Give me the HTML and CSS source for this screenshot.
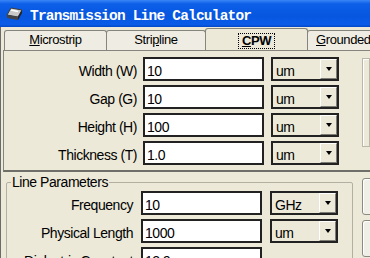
FILE: index.html
```html
<!DOCTYPE html>
<html lang="en">
<head>
  <meta charset="UTF-8">
  <title>Transmission Line Calculator</title>
  <link rel="stylesheet" href="styles.css">
</head>
<body>

  <!-- Title bar -->
  <div class="titlebar">
    <svg class="app-icon" width="17" height="14" viewBox="0 0 17 14">
      <polygon points="5,1 16,3 12,10 1,8" fill="#c9c9c9" stroke="#3a3a3a" stroke-width="1"/>
      <polygon points="1,8 12,10 12,13 1,11" fill="#444"/>
      <polygon points="12,10 16,3 16,6 12,13" fill="#222"/>
      <line x1="5" y1="3" x2="12" y2="4.5" stroke="#fff" stroke-width="1.5"/>
    </svg>
    <span class="title">Transmission Line Calculator</span>
  </div>

  <div class="client">
    <!-- Tabs -->
    <div class="tabs">
      <div class="tab tab-micro"><u>M</u>icrostrip</div>
      <div class="tab tab-strip">Stri<u>p</u>line</div>
      <div class="tab tab-cpw active"><span class="focus"><u>C</u>PW</span></div>
      <div class="tab tab-ground"><u>G</u>rounded</div>
    </div>

    <!-- CPW page -->
    <div class="tabpage">
      <div class="form">
        <div class="row">
          <label class="lbl">Width (W)</label>
          <input class="field" type="text" value="10">
          <div class="combo"><span>um</span><div class="drop"></div></div>
        </div>
        <div class="row">
          <label class="lbl">Gap (G)</label>
          <input class="field" type="text" value="10">
          <div class="combo"><span>um</span><div class="drop"></div></div>
        </div>
        <div class="row">
          <label class="lbl">Height (H)</label>
          <input class="field" type="text" value="100">
          <div class="combo"><span>um</span><div class="drop"></div></div>
        </div>
        <div class="row">
          <label class="lbl">Thickness (T)</label>
          <input class="field" type="text" value="1.0">
          <div class="combo"><span>um</span><div class="drop"></div></div>
        </div>
      </div>
      <div class="side-box"></div>
    </div>

    <!-- Line parameters -->
    <div class="lower">
      <fieldset class="group">
        <legend>Line Parameters</legend>
        <div class="form">
          <div class="row">
            <label class="lbl">Frequency</label>
            <input class="field" type="text" value="10">
            <div class="combo"><span>GHz</span><div class="drop"></div></div>
          </div>
          <div class="row">
            <label class="lbl">Physical Length</label>
            <input class="field" type="text" value="1000">
            <div class="combo"><span>um</span><div class="drop"></div></div>
          </div>
          <div class="row">
            <label class="lbl">Dielectric Constant</label>
            <input class="field" type="text" value="12.9">
          </div>
        </div>
      </fieldset>
      <div class="buttons">
        <div class="btn"></div>
        <div class="btn"></div>
      </div>
    </div>
  </div>

</body>
</html>
```

FILE: styles.css
```css
/* Global */
* {
  box-sizing: border-box;
}

body {
  margin: 0;
  width: 370px;
  height: 258px;
  overflow: hidden;
  background-color: #ece9d8;
  font-family: "Liberation Sans", Arial, sans-serif;
  font-size: 14px;
  letter-spacing: -0.45px;
  color: #000;
}

/* Title bar */
.titlebar {
  height: 27px;
  display: flex;
  color: #fff;
  background: linear-gradient(#3a86f7 0%, #0d5fe8 14%, #0756e0 60%, #0a5ce8 90%, #0447c8 100%);
}

.app-icon {
  margin: 7px 7px 0 6px;
}

.title {
  font-family: "Liberation Mono", monospace;
  font-weight: bold;
  font-size: 14.5px;
  letter-spacing: -0.8px;
  line-height: 16px;
  padding-top: 8px;
  white-space: nowrap;
}

/* Window body */
.client {
  height: 231px;
  border-left: 1px solid #6b6b6b;
}

/* Tabs */
.tabs {
  display: flex;
  align-items: flex-end;
  height: 23px;
  padding-left: 3px;
  white-space: nowrap;
  overflow: hidden;
}

.tab {
  height: 20px;
  margin-left: -1px;
  border: 1px solid #85857e;
  border-bottom: none;
  border-radius: 3px 3px 0 0;
  background-color: #efede3;
  text-align: center;
  font-size: 13px;
  letter-spacing: -0.4px;
  line-height: 18px;
  flex-shrink: 0;
}

.tab-micro {
  width: 103px;
  margin-left: 0;
}

.tab-strip {
  width: 100px;
}

.tab-cpw {
  width: 103px;
}

.tab-ground {
  width: 100px;
  text-align: left;
  padding-left: 8px;
}

.tab.active {
  position: relative;
  z-index: 1;
  height: 23px;
  margin-bottom: -1px;
  padding-top: 3px;
  background-color: #ece9d8;
  font-weight: bold;
}

.focus {
  display: inline-block;
  line-height: 14px;
  padding: 0 3px;
  outline: 1px dotted #000;
}

/* Tab page */
.tabpage {
  display: flex;
  margin-left: 2px;
  padding: 6px 0 5px 0;
  border: 1px solid #85857e;
  border-right: none;
  border-bottom: 2px solid #6f6f69;
}

.form {
  display: flex;
  flex-direction: column;
  gap: 4px;
}

.row {
  display: flex;
  align-items: center;
  height: 24px;
}

.lbl {
  width: 133px;
  margin-right: 6px;
  padding-top: 4px;
  line-height: 16px;
  text-align: right;
  white-space: nowrap;
}

.field {
  width: 121px;
  height: 24px;
  margin: 0;
  padding: 3px 2px 0;
  border: 2px solid #222;
  background: #fff;
  font-family: inherit;
  font-size: 14px;
  letter-spacing: -0.45px;
  color: #000;
  outline: none;
}

.combo {
  display: flex;
  align-items: center;
  width: 68px;
  height: 24px;
  margin-left: 7px;
  padding-left: 3px;
  border: 2px solid #222;
  background-color: #ece9d8;
}

.combo span {
  flex: 1;
  padding-top: 4px;
}

.drop {
  display: flex;
  justify-content: center;
  align-items: center;
  width: 17px;
  height: 20px;
  border: 1px solid;
  border-color: #fff #7d7d76 #7d7d76 #fff;
  background-color: #ece9d8;
}

.drop::after {
  content: "";
  border-left: 3.5px solid transparent;
  border-right: 3.5px solid transparent;
  border-top: 4px solid #000;
}

.side-box {
  width: 60px;
  height: 89px;
  margin: 1px 0 0 23px;
  border: 1px solid #bab7a8;
  box-shadow: inset 1px 1px #fff;
}

/* Line parameters */
.lower {
  display: flex;
  align-items: flex-start;
}

.group {
  flex-shrink: 0;
  width: 347px;
  margin: 1px 0 0 5px;
  padding: 0;
  border: 1px solid #b3b0a1;
  border-radius: 2px;
}

.group legend {
  margin-left: 4px;
  padding: 0 1px;
  line-height: 18px;
}

.group .lbl {
  width: 126px;
  margin-right: 8px;
}

.group .combo {
  margin-left: 8px;
}

.buttons {
  display: flex;
  flex-direction: column;
  gap: 5px;
  margin: 6px 0 0 9px;
}

.btn {
  width: 80px;
  height: 37px;
  border: 1px solid #8a8a80;
  border-radius: 3px;
  box-shadow: inset 1px 1px #fff;
  background-color: #f0efe7;
}
```
